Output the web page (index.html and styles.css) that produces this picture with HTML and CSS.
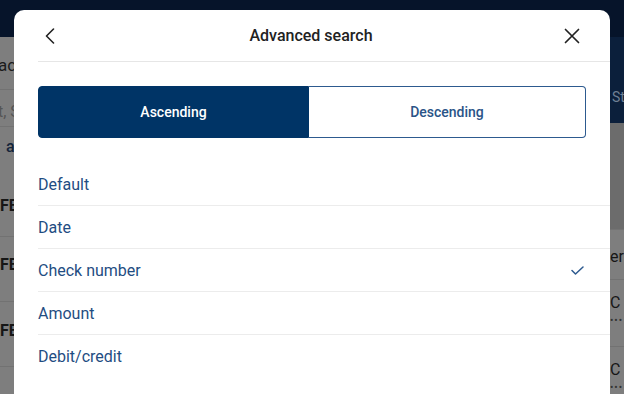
FILE: index.html
```html
<!DOCTYPE html>
<html lang="en">
<head>
<meta charset="utf-8">
<title>Advanced search</title>
<link rel="stylesheet" href="styles.css">
</head>
<body>
<div class="backdrop">
  <div class="bg-left">
    <div class="bg-topbar"></div>
    <div class="bg-row bg-row-title"><span class="bg-title">act</span></div>
    <div class="bg-row bg-row-search"><span class="bg-muted">t, S</span></div>
    <div class="bg-row bg-row-filter"><span class="bg-link">ar</span></div>
    <div class="bg-row bg-row-item1"><span class="bg-strong">FE</span></div>
    <div class="bg-row bg-row-item2"><span class="bg-strong">FE</span></div>
    <div class="bg-row bg-row-item3"><span class="bg-strong">FE</span></div>
  </div>
  <div class="bg-right">
    <div class="bg-navy"><span class="bg-navy-text">Sta</span></div>
    <div class="bg-dark-gray"></div>
    <div class="bg-rrow bg-rrow-head"><span class="bg-cut">er</span></div>
    <div class="bg-rrow"><span class="bg-cut">C</span><span class="bg-cut bg-dots">•••</span></div>
    <div class="bg-rrow bg-rrow-last"><span class="bg-cut">C</span><span class="bg-cut bg-dots">•••</span></div>
  </div>
</div>

<div class="modal" role="dialog" aria-label="Advanced search">
  <div class="modal-header">
    <button class="icon-btn" aria-label="Back">
      <svg width="10" height="16" viewBox="0 0 10 16" fill="none" stroke="#222" stroke-width="1.6" stroke-linecap="round" stroke-linejoin="round"><path d="M8.5 1 L1.5 8 L8.5 15"/></svg>
    </button>
    <h1 class="modal-title">Advanced search</h1>
    <button class="icon-btn" aria-label="Close">
      <svg width="16" height="16" viewBox="0 0 16 16" fill="none" stroke="#222" stroke-width="1.7" stroke-linecap="round"><path d="M1.5 1.5 L14.5 14.5 M14.5 1.5 L1.5 14.5"/></svg>
    </button>
  </div>
  <div class="modal-body">
    <div class="segmented">
      <button class="seg seg-active seg-left">Ascending</button>
      <button class="seg seg-right">Descending</button>
    </div>
    <ul class="sort-list">
      <li class="sort-item">Default</li>
      <li class="sort-item">Date</li>
      <li class="sort-item">Check number
        <svg class="check" width="13" height="9" viewBox="0 0 13 9" fill="none" stroke="#2d5a8f" stroke-width="1.5" stroke-linecap="round" stroke-linejoin="round"><path d="M1 4.5 L4.5 8 L12 1"/></svg>
      </li>
      <li class="sort-item">Amount</li>
      <li class="sort-item sort-item-last">Debit/credit</li>
    </ul>
  </div>
</div>
</body>
</html>
```
FILE: styles.css
```css
* { box-sizing: border-box; }
html, body { margin: 0; padding: 0; }
body {
  width: 624px;
  height: 394px;
  overflow: hidden;
  position: relative;
  font-family: Roboto, "Liberation Sans", Arial, sans-serif;
  background: #7d7d7d;
}

/* dimmed page behind the dialog */
.backdrop {
  display: flex;
  width: 624px;
  height: 394px;
  overflow: hidden;
  font-size: 16px;
  line-height: 20px;
}
.bg-left {
  width: 312px;
  display: flex;
  flex-direction: column;
  background: #7e7e7e;
}
.bg-left > div, .bg-right > div { flex-shrink: 0; }
.bg-topbar { height: 37px; background: #06142a; }
.bg-row {
  display: flex;
  align-items: flex-start;
  border-bottom: 1px solid #727272;
  overflow: hidden;
  white-space: nowrap;
}
.bg-row-title { height: 53px; padding-top: 18px; }
.bg-row-search { height: 37px; padding-top: 12px; }
.bg-row-filter { height: 45px; padding-top: 10px; border-bottom: none; }
.bg-row-item1 { height: 65px; padding-top: 24px; }
.bg-row-item2 { height: 65px; padding-top: 18px; }
.bg-row-item3 { height: 65px; padding-top: 19px; }
.bg-title { color: #1b1b1b; margin-left: -2px; font-size: 17px; }
.bg-muted { color: #555; margin-left: -2px; }
.bg-link { color: #14243a; font-weight: 500; margin-left: 6px; }
.bg-strong { color: #161616; font-weight: 700; }

.bg-right {
  width: 312px;
  display: flex;
  flex-direction: column;
  background: #7e7e7e;
}
.bg-navy {
  height: 123px;
  background: linear-gradient(#06142a 0, #06142a 37px, #0b1f3b 37px);
  display: flex;
  align-items: flex-start;
  justify-content: flex-end;
  padding-top: 87px;
}
.bg-navy-text { color: #6f7f94; font-size: 14px; width: 12px; overflow: hidden; white-space: nowrap; }
.bg-dark-gray { height: 107px; background: #6c6c6c; border-bottom: 1px solid #737373; }
.bg-rrow {
  height: 67px;
  border-bottom: 1px solid #727272;
  display: flex;
  flex-direction: column;
  align-items: flex-end;
  justify-content: flex-start;
  padding-top: 13px;
}
.bg-rrow-head { height: 50px; padding-top: 17px; }
.bg-rrow-last { height: 47px; border-bottom: none; }
.bg-cut {
  width: 14px;
  overflow: hidden;
  white-space: nowrap;
  color: #161616;
}
.bg-dots { color: #333; font-size: 10px; letter-spacing: 1px; line-height: 12px; margin-top: 2px; }

/* dialog */
.modal {
  position: absolute;
  left: 14px;
  top: 10px;
  width: 596px;
  height: 384px;
  background: #fff;
  border-radius: 10px 10px 0 0;
  padding-left: 24px;
}
.modal-header {
  height: 52px;
  display: flex;
  align-items: center;
  justify-content: space-between;
  padding-right: 26px;
  border-bottom: 1px solid #e6e6e6;
}
.icon-btn {
  border: 0;
  background: none;
  padding: 0;
  width: 24px;
  height: 24px;
  display: flex;
  align-items: center;
  justify-content: center;
  cursor: pointer;
}
.modal-title {
  margin: 0;
  font-size: 16px;
  font-weight: 500;
  color: #222;
  margin-top: -1px;
}
.modal-body { padding-top: 24px; }
.segmented {
  display: flex;
  width: 548px;
  height: 52px;
}
.seg {
  font-family: inherit;
  font-size: 14px;
  font-weight: 500;
  border: 1px solid #2d5a8f;
  background: #fff;
  color: #2a5487;
  padding: 0;
  cursor: pointer;
}
.seg-left {
  width: 271px;
  border-radius: 4px 0 0 4px;
}
.seg-right {
  width: 277px;
  border-left: none;
  border-radius: 0 4px 4px 0;
}
.seg-active {
  background: #003466;
  border-color: #003466;
  color: #fff;
}
.sort-list {
  list-style: none;
  margin: 25px 0 0;
  padding: 0;
}
.sort-item {
  height: 43px;
  border-bottom: 1px solid #ececec;
  display: flex;
  align-items: center;
  justify-content: space-between;
  padding-right: 26px;
  font-size: 16px;
  color: #1f4d82;
}
.sort-item-last { border-bottom: none; }
```
